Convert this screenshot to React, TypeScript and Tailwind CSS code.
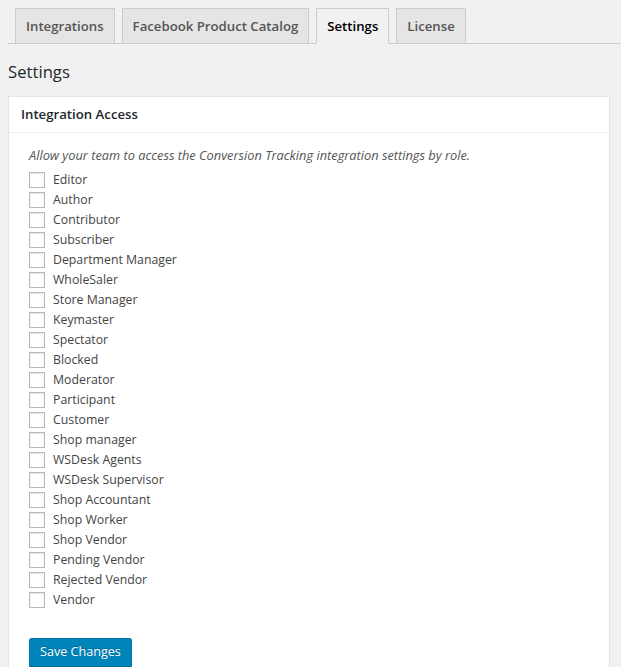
import React from 'react'

const roles = [
  'Editor',
  'Author',
  'Contributor',
  'Subscriber',
  'Department Manager',
  'WholeSaler',
  'Store Manager',
  'Keymaster',
  'Spectator',
  'Blocked',
  'Moderator',
  'Participant',
  'Customer',
  'Shop manager',
  'WSDesk Agents',
  'WSDesk Supervisor',
  'Shop Accountant',
  'Shop Worker',
  'Shop Vendor',
  'Pending Vendor',
  'Rejected Vendor',
  'Vendor',
]

const tabs = ['Integrations', 'Facebook Product Catalog', 'Settings', 'License']

export default function App() {
  return (
    <div className="min-h-screen bg-[#f1f1f1] font-['Open_Sans','Noto_Sans',sans-serif] text-[12.3px] text-[#444]">
      <nav className="ml-2 flex items-end border-b border-[#ccc] pt-2">
        {tabs.map((tab) => {
          const active = tab === 'Settings'
          return (
            <a
              key={tab}
              className={
                active
                  ? 'ml-[7px] -mb-px border border-[#ccc] border-b-[#f1f1f1] bg-[#f1f1f1] px-[10px] py-[5px] text-[13.2px] font-semibold leading-6 text-black'
                  : 'ml-[7px] border border-b-0 border-[#ccc] bg-[#e5e5e5] px-[10px] py-[5px] text-[13.2px] font-semibold leading-6 text-[#555]'
              }
            >
              {tab}
            </a>
          )
        })}
      </nav>

      <div className="ml-2 mr-[11px]">
        <h2 className="mt-4 mb-[13px] text-[16.7px] leading-[23px] text-[#23282d]">Settings</h2>

        <div className="border border-[#e5e5e5] bg-white shadow-[0_1px_1px_rgba(0,0,0,0.04)]">
          <h3 className="border-b border-[#eee] px-3 py-[7px] text-[13.2px] font-semibold leading-[21px] text-[#23282d]">
            Integration Access
          </h3>

          <div className="px-5 pt-3 pb-8">
            <p className="mb-[5px] text-[12.8px] italic leading-5 text-[#555]">
              Allow your team to access the Conversion Tracking integration settings by role.
            </p>

            <div className="flex flex-col">
              {roles.map((role) => (
                <label key={role} className="flex h-5 items-center gap-2">
                  <input
                    type="checkbox"
                    className="h-4 w-4 appearance-none border border-[#b4b9be] bg-white shadow-[inset_0_1px_2px_rgba(0,0,0,0.1)]"
                  />
                  <span>{role}</span>
                </label>
              ))}
            </div>

            <button className="mt-7 h-[29px] rounded-[3px] border border-[#0073aa] border-b-[#006799] bg-[#0085ba] px-[10px] pb-px text-[12.6px] leading-[26px] text-white shadow-[0_1px_0_#006799] [text-shadow:0_-1px_1px_#006799]">
              Save Changes
            </button>
          </div>
        </div>
      </div>
    </div>
  )
}
